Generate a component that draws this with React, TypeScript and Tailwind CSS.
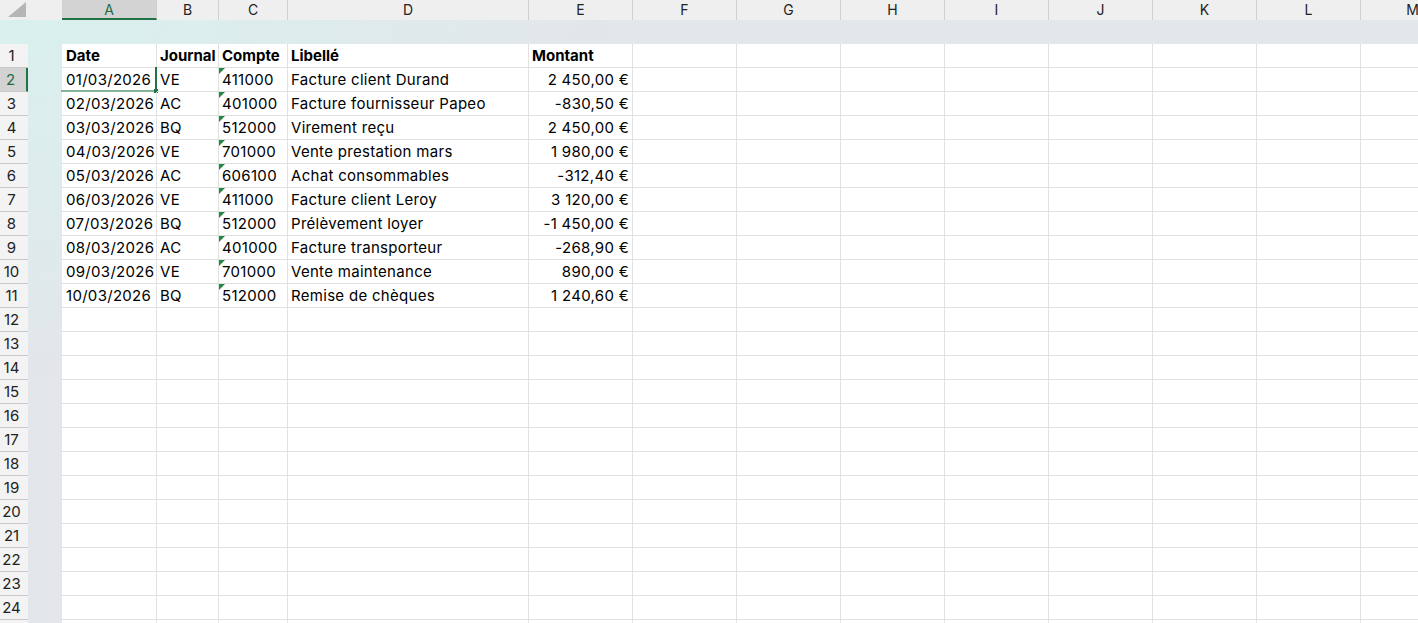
import React from 'react';

const columns = [
  { key: 'A', width: 'w-[95px]' },
  { key: 'B', width: 'w-[62px]' },
  { key: 'C', width: 'w-[69px]' },
  { key: 'D', width: 'w-[241px]' },
  { key: 'E', width: 'w-[104px]' },
  { key: 'F', width: 'w-[104px]' },
  { key: 'G', width: 'w-[104px]' },
  { key: 'H', width: 'w-[104px]' },
  { key: 'I', width: 'w-[104px]' },
  { key: 'J', width: 'w-[104px]' },
  { key: 'K', width: 'w-[104px]' },
  { key: 'L', width: 'w-[104px]' },
  { key: 'M', width: 'w-[104px]' },
];

const NB = '\u00a0';

const entries = [
  ['01/03/2026', 'VE', '411000', 'Facture client Durand', `2${NB}450,00${NB}€`],
  ['02/03/2026', 'AC', '401000', 'Facture fournisseur Papeo', `-830,50${NB}€`],
  ['03/03/2026', 'BQ', '512000', 'Virement reçu', `2${NB}450,00${NB}€`],
  ['04/03/2026', 'VE', '701000', 'Vente prestation mars', `1${NB}980,00${NB}€`],
  ['05/03/2026', 'AC', '606100', 'Achat consommables', `-312,40${NB}€`],
  ['06/03/2026', 'VE', '411000', 'Facture client Leroy', `3${NB}120,00${NB}€`],
  ['07/03/2026', 'BQ', '512000', 'Prélèvement loyer', `-1${NB}450,00${NB}€`],
  ['08/03/2026', 'AC', '401000', 'Facture transporteur', `-268,90${NB}€`],
  ['09/03/2026', 'VE', '701000', 'Vente maintenance', `890,00${NB}€`],
  ['10/03/2026', 'BQ', '512000', 'Remise de chèques', `1${NB}240,60${NB}€`],
];

// 24 numbered rows, plus the top sliver of the 25th
const ROW_COUNT = 25;
const LAST_LABEL = 24;

function TextMarker() {
  // small green triangle Excel puts on numbers stored as text
  return (
    <svg className="absolute left-0 top-0" width="6" height="6" viewBox="0 0 6 6">
      <polygon points="0,0 6,0 0,6" fill="#1f8a3b" />
    </svg>
  );
}

function Cell({ col, row }: { col: string; row: number }) {
  const width = columns.find((c) => c.key === col)!.width;
  const isHeader = row === 1;
  const entry = row >= 2 && row <= 11 ? entries[row - 2] : null;
  const idx = 'ABCDE'.indexOf(col);
  let content: React.ReactNode = null;

  if (isHeader && idx >= 0) {
    content = ['Date', 'Journal', 'Compte', 'Libellé', 'Montant'][idx];
  } else if (entry && idx >= 0) {
    content = entry[idx];
  }

  const selected = col === 'A' && row === 2;

  return (
    <div
      className={`relative ${width} shrink-0 h-[24px] border-r border-b border-[#e1e1e1] px-[3px] pt-px leading-[22px] whitespace-nowrap ${
        isHeader ? 'font-bold tracking-normal' : ''
      } ${col === 'E' && !isHeader ? 'text-right' : ''} ${col === 'A' ? 'pl-[4px]' : ''}`}
    >
      {entry && col === 'C' && <TextMarker />}
      {content}
      {selected && (
        <>
          <div className="absolute -right-px -bottom-px w-[2px] h-[25px] bg-[#217346]" />
          <div className="absolute -left-px -bottom-px w-[96px] h-[2px] bg-[#86b49b]" />
          <div className="absolute -right-[2px] -bottom-[2px] w-[4px] h-[4px] bg-[#217346]" />
        </>
      )}
    </div>
  );
}

export default function App() {
  const rows = Array.from({ length: ROW_COUNT }, (_, i) => i + 1);

  return (
    <div className="w-[1418px] h-[623px] overflow-hidden bg-[radial-gradient(620px_380px_at_0_0,#d8f1ee,#e3e6ea)] font-['Inter',sans-serif] text-[15px] text-black">
      {/* Column letters */}
      <div className="flex h-[20px] bg-[#efefef] text-[14px] text-[#222]">
        <div className="relative w-[62px] shrink-0">
          <svg className="absolute left-[7px] top-[2px]" width="20" height="16" viewBox="0 0 20 16">
            <polygon points="19,0 19,15 1,15" fill="#b5b5b5" />
          </svg>
        </div>
        {columns.map((c) => (
          <div
            key={c.key}
            className={`${c.width} shrink-0 border-r border-[#cfcfcf] text-center leading-[20px] ${
              c.key === 'A' ? 'bg-[#d3d3d3] text-[#1e6b41] border-b-2 border-b-[#217346] leading-[18px]' : ''
            }`}
          >
            {c.key}
          </div>
        ))}
      </div>

      {/* empty band above the sheet */}
      <div className="h-[24px]" />

      <div className="flex">
        {/* Row numbers */}
        <div className="w-[28px] shrink-0 bg-[#f3f3f3] text-[15px] text-[#222]">
          {rows.map((r) => (
            <div
              key={r}
              className={`h-[24px] border-b border-[#c9c9c9] pr-[5px] pt-px text-center leading-[22px] ${
                r === 2 ? 'bg-[#d3d3d3] text-[#1e6b41] border-r-2 border-r-[#217346]' : ''
              }`}
            >
              {r <= LAST_LABEL ? r : ''}
            </div>
          ))}
        </div>

        {/* grey margin strip */}
        <div className="w-[34px] shrink-0" />

        {/* Cells */}
        <div className="flex-1 bg-white tracking-[0.3px]">
          {rows.map((r) => (
            <div key={r} className="flex">
              {columns.map((c) => (
                <Cell key={c.key} col={c.key} row={r} />
              ))}
            </div>
          ))}
        </div>
      </div>
    </div>
  );
}
